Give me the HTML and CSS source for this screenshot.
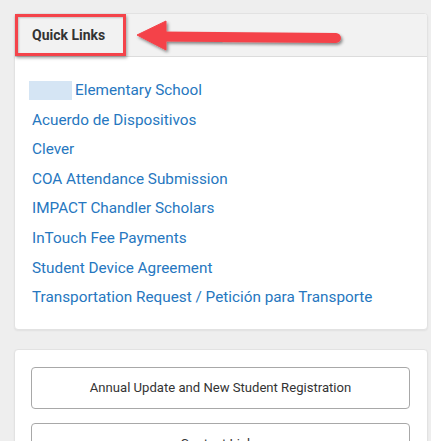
FILE: index.html
```html
<!DOCTYPE html>
<html>
<head>
<meta charset="utf-8">
<link rel="stylesheet" href="styles.css">
</head>
<body>
<div class="page">
  <section class="card">
    <header class="card-head">
      <h2 class="card-title">Quick Links</h2>
    </header>
    <ul class="links">
      <li><span class="redacted"></span><a href="#">Elementary School</a></li>
      <li><a href="#">Acuerdo de Dispositivos</a></li>
      <li><a href="#">Clever</a></li>
      <li><a href="#">COA Attendance Submission</a></li>
      <li><a href="#">IMPACT Chandler Scholars</a></li>
      <li><a href="#">InTouch Fee Payments</a></li>
      <li><a href="#">Student Device Agreement</a></li>
      <li><a href="#">Transportation Request / Petición para Transporte</a></li>
    </ul>
  </section>
  <section class="card card-buttons">
    <button class="btn">Annual Update and New Student Registration</button>
    <button class="btn">Contact Links</button>
  </section>
  <div class="highlight-box"></div>
  <svg class="arrow" width="431" height="80" viewBox="0 0 431 80">
    <defs>
      <filter id="sh" x="-10%" y="-50%" width="130%" height="200%">
        <feDropShadow dx="1.5" dy="2" stdDeviation="1.6" flood-color="#000" flood-opacity="0.45"/>
      </filter>
    </defs>
    <g filter="url(#sh)" fill="#f4434a" stroke="#f4434a">
      <line x1="160" y1="36.5" x2="336" y2="38" stroke-width="10" stroke-linecap="round"/>
      <polygon points="137,35 166,21 166,50" stroke-width="1" stroke-linejoin="round"/>
    </g>
  </svg>
</div>
</body>
</html>
```
FILE: styles.css
```css
html, body {
  margin: 0;
  padding: 0;
  background: #eeeeee;
  font-family: Roboto, "Liberation Sans", Arial, sans-serif;
}
.page {
  position: relative;
  width: 431px;
  height: 441px;
  overflow: hidden;
  padding: 13px 3px 0 14px;
  box-sizing: border-box;
}
.card {
  background: #fff;
  border: 1px solid #e2e2e2;
  border-radius: 4px;
  box-shadow: 0 1px 2px rgba(0,0,0,0.06);
  overflow: hidden;
}
.card-head {
  background: #f2f2f2;
  border-bottom: 1px solid #dcdcdc;
  height: 42px;
  display: flex;
  align-items: center;
  padding-left: 17px;
}
.card-title {
  margin: 0;
  font-size: 14px;
  font-weight: 700;
  color: #333;
}
.links {
  list-style: none;
  margin: 0;
  padding: 19px 0 16px 17px;
}
.links li {
  line-height: 29.6px;
  font-size: 15.3px;
  display: flex;
  align-items: center;
}
.links a {
  color: #2677c0;
  text-decoration: none;
}
.redacted {
  display: inline-block;
  width: 43px;
  height: 19px;
  background: #d5e5f4;
  margin-left: -3px;
  margin-right: 3px;
}
.card-buttons {
  margin-top: 19px;
  padding: 17px 17px 30px 16px;
  display: flex;
  flex-direction: column;
  gap: 14px;
}
.btn {
  height: 42px;
  background: #fff;
  border: 1px solid #a8a8a8;
  border-radius: 4px;
  font-family: Roboto, "Liberation Sans", Arial, sans-serif;
  font-size: 13.1px;
  font-weight: 400;
  color: #333;
}
.highlight-box {
  position: absolute;
  left: 15px;
  top: 14px;
  width: 111px;
  height: 42px;
  box-sizing: border-box;
  border: 3px solid #f4434a;
  box-shadow: 1px 2px 3px rgba(0,0,0,0.35), inset 1px 1px 2px rgba(0,0,0,0.2);
}
.arrow {
  position: absolute;
  left: 0;
  top: 0;
}
```
